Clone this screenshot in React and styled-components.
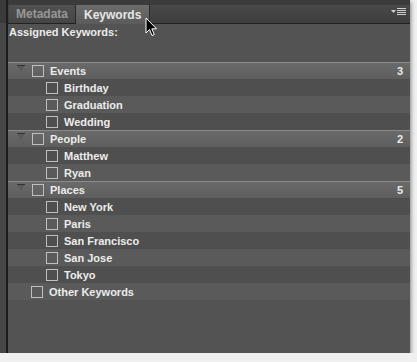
import React from 'react';
import styled, { createGlobalStyle } from 'styled-components';

const GlobalStyle = createGlobalStyle`
  html, body {
    margin: 0;
    padding: 0;
    background: #f0f0f0;
  }
  body {
    font-family: "Liberation Sans", Arial, sans-serif;
  }
`;

const Frame = styled.div`
  position: relative;
  width: 410px;
  height: 353px;
  display: flex;
  box-shadow: 1px 2px 4px rgba(0, 0, 0, 0.45);
`;

const SideStrip = styled.div`
  width: 6px;
  background: linear-gradient(#3a3a3a 0 23px, #474747 23px);
  border-right: 2px solid #1d1d1d;
`;

const Panel = styled.div`
  flex: 1;
  display: flex;
  flex-direction: column;
  background: #535353;
  min-width: 0;
`;

const TabBar = styled.div`
  height: 18px;
  padding-top: 5px;
  padding-left: 1px;
  padding-right: 4px;
  display: flex;
  align-items: stretch;
  background: linear-gradient(#3b3b3b 0 5px, #484848 5px, #3f3f3f 22px);
  border-bottom: 1px solid #222;
  box-sizing: content-box;
`;

const Tab = styled.div`
  display: flex;
  align-items: center;
  padding: 0 ${p => (p.$active ? '8px' : '7px')};
  font-size: 12px;
  font-weight: bold;
  color: ${p => (p.$active ? '#e6e6e6' : '#989898')};
  background: ${p =>
    p.$active
      ? 'linear-gradient(#6c6c6c, #5b5b5b)'
      : 'linear-gradient(#515151, #454545)'};
  border-right: 1px solid #2a2a2a;
  margin-bottom: ${p => (p.$active ? '-1px' : '0')};
`;

const Spacer = styled.div`
  flex: 1;
`;

const MenuButton = styled.div`
  display: flex;
  align-items: center;
  padding-bottom: 4px;
`;

const Assigned = styled.div`
  height: 38px;
  padding: 2px 1px 0;
  box-sizing: border-box;
  font-size: 11px;
  font-weight: bold;
  color: #ececec;
`;

const List = styled.div`
  display: flex;
  flex-direction: column;
`;

const rowBg = {
  header: 'linear-gradient(#8a8a8a 0 1px, #6a6a6a 1px, #5e5e5e)',
  dark: '#4f4f4f',
  light: '#5a5a5a',
};

const Row = styled.div`
  height: 17px;
  display: flex;
  align-items: center;
  padding-left: ${p => p.$indent}px;
  padding-right: 7px;
  background: ${p => rowBg[p.$tone]};
  font-size: 11px;
  font-weight: bold;
  color: #ececec;
`;

const Twisty = styled.svg`
  width: 8px;
  height: 7px;
  margin-right: 7px;
  margin-top: -4px;
`;

const Box = styled.span`
  width: 10px;
  height: 10px;
  border: 1px solid #bfbfbf;
  margin-right: 6px;
  flex-shrink: 0;
`;

const Label = styled.span`
  flex: 1;
`;

const Count = styled.span`
  color: #ececec;
`;

const Cursor = styled.svg`
  position: absolute;
  left: 145px;
  top: 17px;
  width: 13px;
  height: 21px;
`;

const groups = [
  { name: 'Events', items: ['Birthday', 'Graduation', 'Wedding'] },
  { name: 'People', items: ['Matthew', 'Ryan'] },
  { name: 'Places', items: ['New York', 'Paris', 'San Francisco', 'San Jose', 'Tokyo'] },
];

function Group({ name, items }) {
  return (
    <>
      <Row $tone="header" $indent={9}>
        <Twisty viewBox="0 0 8 7">
          <polygon points="0,0 8,0 4,7" fill="#5a5a5a" />
          <line x1="0" y1="0.5" x2="8" y2="0.5" stroke="#333" />
        </Twisty>
        <Box />
        <Label>{name}</Label>
        <Count>{items.length}</Count>
      </Row>
      {items.map((item, i) => (
        <Row key={item} $tone={i % 2 === 0 ? 'dark' : 'light'} $indent={38}>
          <Box />
          <Label>{item}</Label>
        </Row>
      ))}
    </>
  );
}

export default function App() {
  return (
    <>
      <GlobalStyle />
      <Frame>
        <SideStrip />
        <Panel>
          <TabBar>
            <Tab>Metadata</Tab>
            <Tab $active>Keywords</Tab>
            <Spacer />
            <MenuButton>
              <svg width="15" height="8" viewBox="0 0 15 8">
                <polygon points="0,2 5,2 2.5,5" fill="#cfcfcf" />
                <rect x="6" y="0" width="9" height="1" fill="#cfcfcf" />
                <rect x="6" y="2" width="9" height="1" fill="#cfcfcf" />
                <rect x="6" y="4" width="9" height="1" fill="#cfcfcf" />
                <rect x="6" y="6" width="9" height="1" fill="#cfcfcf" />
              </svg>
            </MenuButton>
          </TabBar>
          <Assigned>Assigned Keywords:</Assigned>
          <List>
            {groups.map(g => (
              <Group key={g.name} {...g} />
            ))}
            <Row $tone="light" $indent={23}>
              <Box />
              <Label>Other Keywords</Label>
            </Row>
          </List>
        </Panel>
        <Cursor viewBox="0 0 13 21">
          <path
            d="M1,1 L1,16 L4.5,12.5 L7,18.5 L9.3,17.5 L6.8,11.8 L11.5,11.8 Z"
            fill="#000"
            stroke="#fff"
            strokeWidth="1"
            strokeLinejoin="round"
          />
        </Cursor>
      </Frame>
    </>
  );
}
